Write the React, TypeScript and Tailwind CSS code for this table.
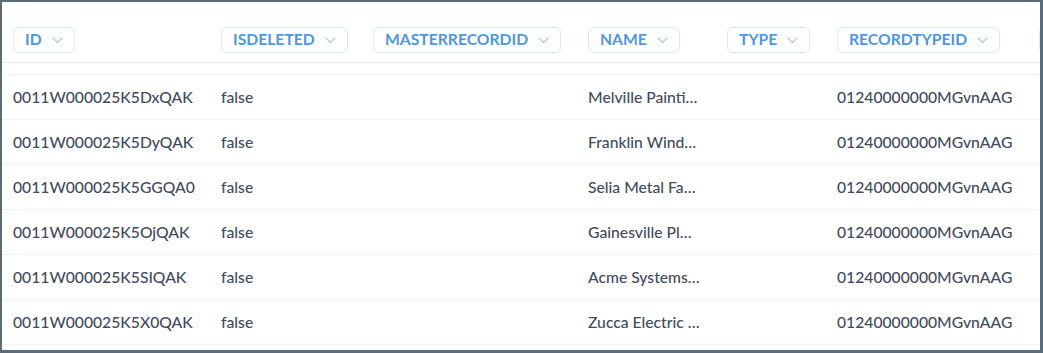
import React from "react";

const cols = [
  { key: "ID", w: "w-[208px]" },
  { key: "ISDELETED", w: "w-[152px]" },
  { key: "MASTERRECORDID", w: "w-[215px]" },
  { key: "NAME", w: "w-[139px]" },
  { key: "TYPE", w: "w-[110px]" },
  { key: "RECORDTYPEID", w: "w-[202px]" },
];

const rows = [
  ["0011W000025K5DxQAK", "false", "", "Melville Painti…", "", "01240000000MGvnAAG"],
  ["0011W000025K5DyQAK", "false", "", "Franklin Wind…", "", "01240000000MGvnAAG"],
  ["0011W000025K5GGQA0", "false", "", "Selia Metal Fa…", "", "01240000000MGvnAAG"],
  ["0011W000025K5OjQAK", "false", "", "Gainesville Pl…", "", "01240000000MGvnAAG"],
  ["0011W000025K5SIQAK", "false", "", "Acme Systems…", "", "01240000000MGvnAAG"],
  ["0011W000025K5X0QAK", "false", "", "Zucca Electric …", "", "01240000000MGvnAAG"],
];

function Chevron() {
  return (
    <svg width="11" height="7" viewBox="0 0 11 7" fill="none" className="shrink-0">
      <path d="M1 1.2 L5.5 5.5 L10 1.2" stroke="#a3c8ef" strokeWidth="1.1" strokeLinecap="round" strokeLinejoin="round" />
    </svg>
  );
}

function Chip({ label }: { label: string }) {
  return (
    <div className="inline-flex items-center h-[26px] px-[11px] gap-[10px] border border-[#dce9f8] rounded-[6px] bg-white">
      <span className="text-[15.7px] font-bold text-[#4d97e3] leading-none">{label}</span>
      <Chevron />
    </div>
  );
}

export default function App() {
  return (
    <div className="w-[1043px] h-[353px] bg-white border-t-2 border-l-2 border-r-[3px] border-b-[3px] border-[#5d6c79] overflow-hidden font-['Lato',sans-serif]">
      <div className="flex items-start pl-[11px] pt-[25px] h-[61px] border-b border-[#e6e9ee] whitespace-nowrap">
        {cols.map((c) => (
          <div key={c.key} className={`${c.w} shrink-0`}>
            <Chip label={c.key} />
          </div>
        ))}
        <div className="shrink-0 w-[2px] overflow-hidden">
          <div className="w-[26px] h-[26px] border border-[#dce9f8] rounded-[6px]" />
        </div>
      </div>
      <div className="h-[12px] border-b border-[#f1f3f5]" />
      {rows.map((r, i) => (
        <div key={i} className="flex items-center pl-[11px] pt-[2px] h-[45px] border-b border-[#f1f3f5] whitespace-nowrap">
          {r.map((v, j) => (
            <div key={j} className={`${cols[j].w} shrink-0 text-[15.7px] font-medium text-[#434b5c]`}>
              {v}
            </div>
          ))}
        </div>
      ))}
    </div>
  );
}
